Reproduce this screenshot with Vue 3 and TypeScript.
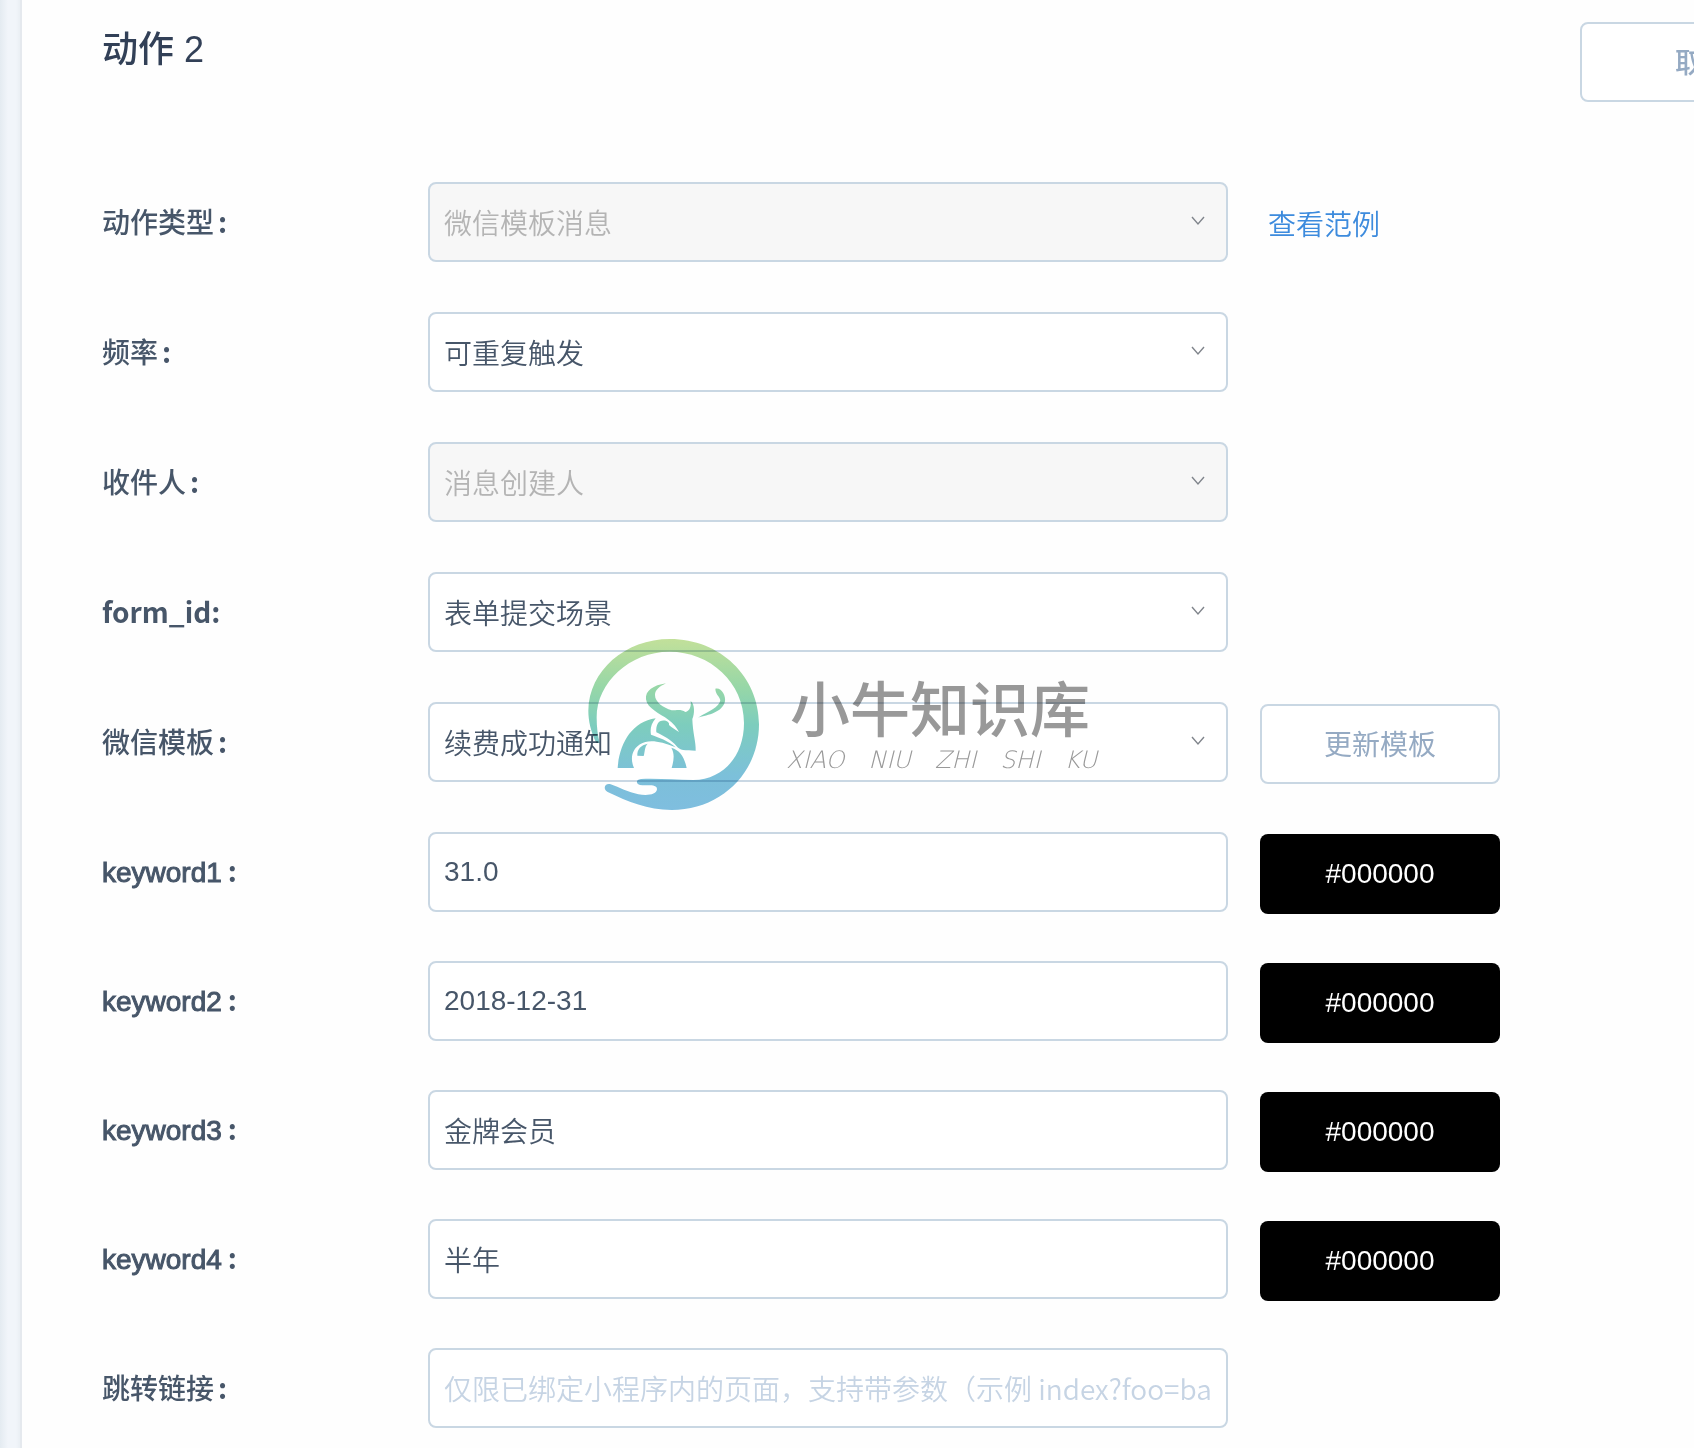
<script setup lang="ts">
import { reactive, ref } from 'vue'

interface SelectRow {
  id: string
  label: string
  value: string
  disabled: boolean
}

interface KeywordRow {
  id: string
  value: string
  color: string
}

const selects: SelectRow[] = [
  { id: 'type', label: '动作类型', value: '微信模板消息', disabled: true },
  { id: 'frequency', label: '频率', value: '可重复触发', disabled: false },
  { id: 'receiver', label: '收件人', value: '消息创建人', disabled: true },
  { id: 'form_id', label: 'form_id', value: '表单提交场景', disabled: false },
  { id: 'template', label: '微信模板', value: '续费成功通知', disabled: false },
]

const keywords = reactive<KeywordRow[]>([
  { id: 'keyword1', value: '31.0', color: '#000000' },
  { id: 'keyword2', value: '2018-12-31', color: '#000000' },
  { id: 'keyword3', value: '金牌会员', color: '#000000' },
  { id: 'keyword4', value: '半年', color: '#000000' },
])

const link = ref('')
const pinyin = ['XIAO', 'NIU', 'ZHI', 'SHI', 'KU']
</script>

<template>
  <div class="page">
    <div class="rail"></div>
    <main class="panel">
      <header class="head">
        <h1 class="title">动作 <span class="number">2</span></h1>
        <button type="button" class="btn cancel">取消</button>
      </header>

      <form class="form" @submit.prevent>
        <div v-for="s in selects" :key="s.id" class="row">
          <label class="label" :class="{ strong: s.id === 'form_id' }" :for="s.id">{{ s.label }}<span class="colon">:</span></label>
          <div class="select-box">
            <select :id="s.id" class="field select" :disabled="s.disabled">
              <option>{{ s.value }}</option>
            </select>
            <svg class="arrow" viewBox="0 0 14 10" aria-hidden="true">
              <path d="M1 1 L7 8 L13 1" />
            </svg>
          </div>
          <a v-if="s.id === 'type'" class="link" href="#">查看范例</a>
          <button v-if="s.id === 'template'" type="button" class="btn side">更新模板</button>
        </div>

        <div v-for="k in keywords" :key="k.id" class="row tight">
          <label class="label latin" :for="k.id">{{ k.id }}<span class="colon">:</span></label>
          <input :id="k.id" v-model="k.value" class="field" type="text" />
          <button type="button" class="btn side swatch" :style="{ backgroundColor: k.color }">{{ k.color }}</button>
        </div>

        <div class="row">
          <label class="label" for="link">跳转链接<span class="colon">:</span></label>
          <input
            id="link"
            v-model="link"
            class="field hint"
            type="text"
            placeholder="仅限已绑定小程序内的页面，支持带参数（示例 index?foo=bar）"
          />
        </div>
      </form>
    </main>

    <div class="watermark">
      <svg class="logo" viewBox="81 54 519 525" aria-hidden="true">
        <defs>
          <linearGradient id="wm" gradientUnits="userSpaceOnUse" x1="0" y1="60" x2="0" y2="573">
            <stop offset="0" stop-color="#c2e09a" />
            <stop offset="0.28" stop-color="#98d8a8" />
            <stop offset="0.5" stop-color="#7dcdbd" />
            <stop offset="0.8" stop-color="#7cc0da" />
            <stop offset="1" stop-color="#7fbfe0" />
          </linearGradient>
        </defs>
        <g fill="url(#wm)">
          <path d="M109 372 C92 336 85 305 85 275 C87 155 195 60 330 60 C480 60 597 172 597 316 C597 462 482 573 335 573 C262 573 205 548 143 519 C126 509 136 491 152 496 C178 505 205 520 235 526 C262 531 290 527 291 511 C291 497 273 499 247 499 C228 499 224 482 243 480 C300 478 345 483 400 483 C490 482 552 410 552 312 C552 190 450 98 328 98 C210 98 110 190 110 295 C110 325 113 350 119 372 Z" />
          <path d="M173 447 C178 375 215 308 287 298 C273 315 270 330 273 347 C295 355 325 365 347 385 C300 366 265 360 240 376 C215 392 210 420 222 447 Z" />
          <path d="M232 410 C231 390 243 378 263 374 C253 384 255 400 251 411 Z" />
          <path d="M335 447 C341 425 345 405 334 386 C362 394 374 418 380 447 Z" />
          <path d="M318 193 C280 199 255 215 258 241 C261 268 300 284 325 302 C340 313 350 325 357 339 C343 330 335 326 327 318 C330 307 312 301 300 307 C291 313 288 325 289 340 C310 350 333 362 350 382 C358 394 375 395 407 395 C408 370 398 340 397 300 C404 285 405 256 392 246 C394 262 390 276 376 279 C362 268 345 275 335 274 C310 266 285 250 285 228 C285 212 300 202 318 193 Z" />
          <path d="M466 209 C484 204 498 230 495 247 C488 280 445 288 414 296 C445 277 478 265 481 244 C478 230 467 228 466 209 Z" />
        </g>
      </svg>
      <div class="brand">
        <div class="brand-name">小牛知识库</div>
        <div class="brand-pinyin">
          <span v-for="w in pinyin" :key="w">{{ w }}</span>
        </div>
      </div>
    </div>
  </div>
</template>

<style>
body {
  margin: 0;
  background: #fefefe;
}
</style>

<style scoped>
.page {
  position: relative;
  display: flex;
  min-height: 100vh;
  overflow: hidden;
  font-family: 'Liberation Sans', 'Noto Sans CJK SC', sans-serif;
  font-size: 28px;
  line-height: 40px;
  color: #475669;
}

.rail {
  box-sizing: border-box;
  flex: none;
  width: 22px;
  border-right: 2px solid #e5e9ee;
  background: linear-gradient(to right, #e4ebf1, #f1f5fa 8px, #f1f5fa 16px, #eaeff4);
}

.panel {
  flex: 1;
  min-width: 0;
  padding: 22px 0 16px 80px;
}

.head {
  display: flex;
  justify-content: space-between;
  margin: 0 -126px 80px 0;
}

.title {
  margin: 0;
  font-size: 36px;
  line-height: 56px;
  font-weight: 500;
  color: #324057;
}

.number {
  font-weight: 400;
}

.row {
  display: flex;
  align-items: flex-start;
  height: 82px;
  margin-bottom: 48px;
}

.row.tight {
  margin-bottom: 47px;
}

.row:last-child {
  margin-bottom: 0;
}

.label {
  flex: none;
  width: 326px;
  line-height: 78px;
  font-family: 'Noto Sans CJK SC', sans-serif;
  font-weight: 500;
}

.label.strong {
  font-weight: 700;
}

.label.latin {
  line-height: 76px;
  font-family: 'Liberation Sans', sans-serif;
  font-weight: 400;
  -webkit-text-stroke: 1px currentColor;
}

.colon {
  margin-left: 4px;
  font-family: 'Noto Sans CJK SC', sans-serif;
  font-weight: 700;
  -webkit-text-stroke: 0;
}

.strong .colon {
  margin-left: 0;
}

.latin .colon {
  margin-left: 6px;
}

.field {
  box-sizing: border-box;
  width: 800px;
  height: 80px;
  margin: 0;
  padding: 0 14px;
  border: 2px solid #c9d7e3;
  border-radius: 8px;
  outline: none;
  background: #fff;
  font: inherit;
  font-weight: 350;
  color: #475669;
}

.select-box {
  position: relative;
  flex: none;
}

.select {
  display: block;
  appearance: none;
  font-family: 'Noto Sans CJK SC', sans-serif;
}

.select:disabled {
  background: #f7f7f7;
  color: #b4b4b4;
  opacity: 1;
}

.arrow {
  position: absolute;
  top: 34px;
  right: 23px;
  width: 14px;
  height: 10px;
  fill: none;
  stroke: #80858c;
  stroke-width: 1.4;
  pointer-events: none;
}

.hint {
  font-family: 'Noto Sans CJK SC', sans-serif;
}

.hint::placeholder {
  color: #c6d4e4;
  opacity: 1;
}

.btn {
  box-sizing: border-box;
  flex: none;
  width: 240px;
  height: 80px;
  padding: 0 0 3px;
  border: 2px solid #c9d7e3;
  border-radius: 8px;
  background: #fff;
  font: inherit;
  font-family: 'Noto Sans CJK SC', sans-serif;
  color: #95aac3;
}

.cancel {
  padding-left: 6px;
  font-weight: 500;
}

.side {
  margin: 2px 0 0 32px;
}

.swatch {
  padding: 0;
  border: 0;
  font-family: 'Liberation Sans', sans-serif;
  color: #fff;
}

.link {
  margin-left: 40px;
  line-height: 82px;
  font-family: 'Noto Sans CJK SC', sans-serif;
  font-weight: 350;
  color: #3d8bdd;
  text-decoration: none;
}

.watermark {
  position: absolute;
  inset: 0;
  display: flex;
  align-items: center;
  justify-content: center;
  gap: 26px;
  mix-blend-mode: multiply;
  pointer-events: none;
}

.logo {
  flex: none;
  width: 173px;
  height: 175px;
}

.brand {
  width: 321px;
  color: #999;
}

.brand-name {
  padding-left: 4px;
  font-family: 'Noto Sans CJK SC', sans-serif;
  font-size: 60px;
  font-weight: 500;
  line-height: 72px;
  white-space: nowrap;
}

.brand-pinyin {
  display: flex;
  justify-content: space-between;
  padding-right: 10px;
  font-family: 'DejaVu Sans Light', 'DejaVu Sans', sans-serif;
  font-size: 24px;
  line-height: 36px;
  font-style: italic;
  font-weight: 200;
}
</style>
